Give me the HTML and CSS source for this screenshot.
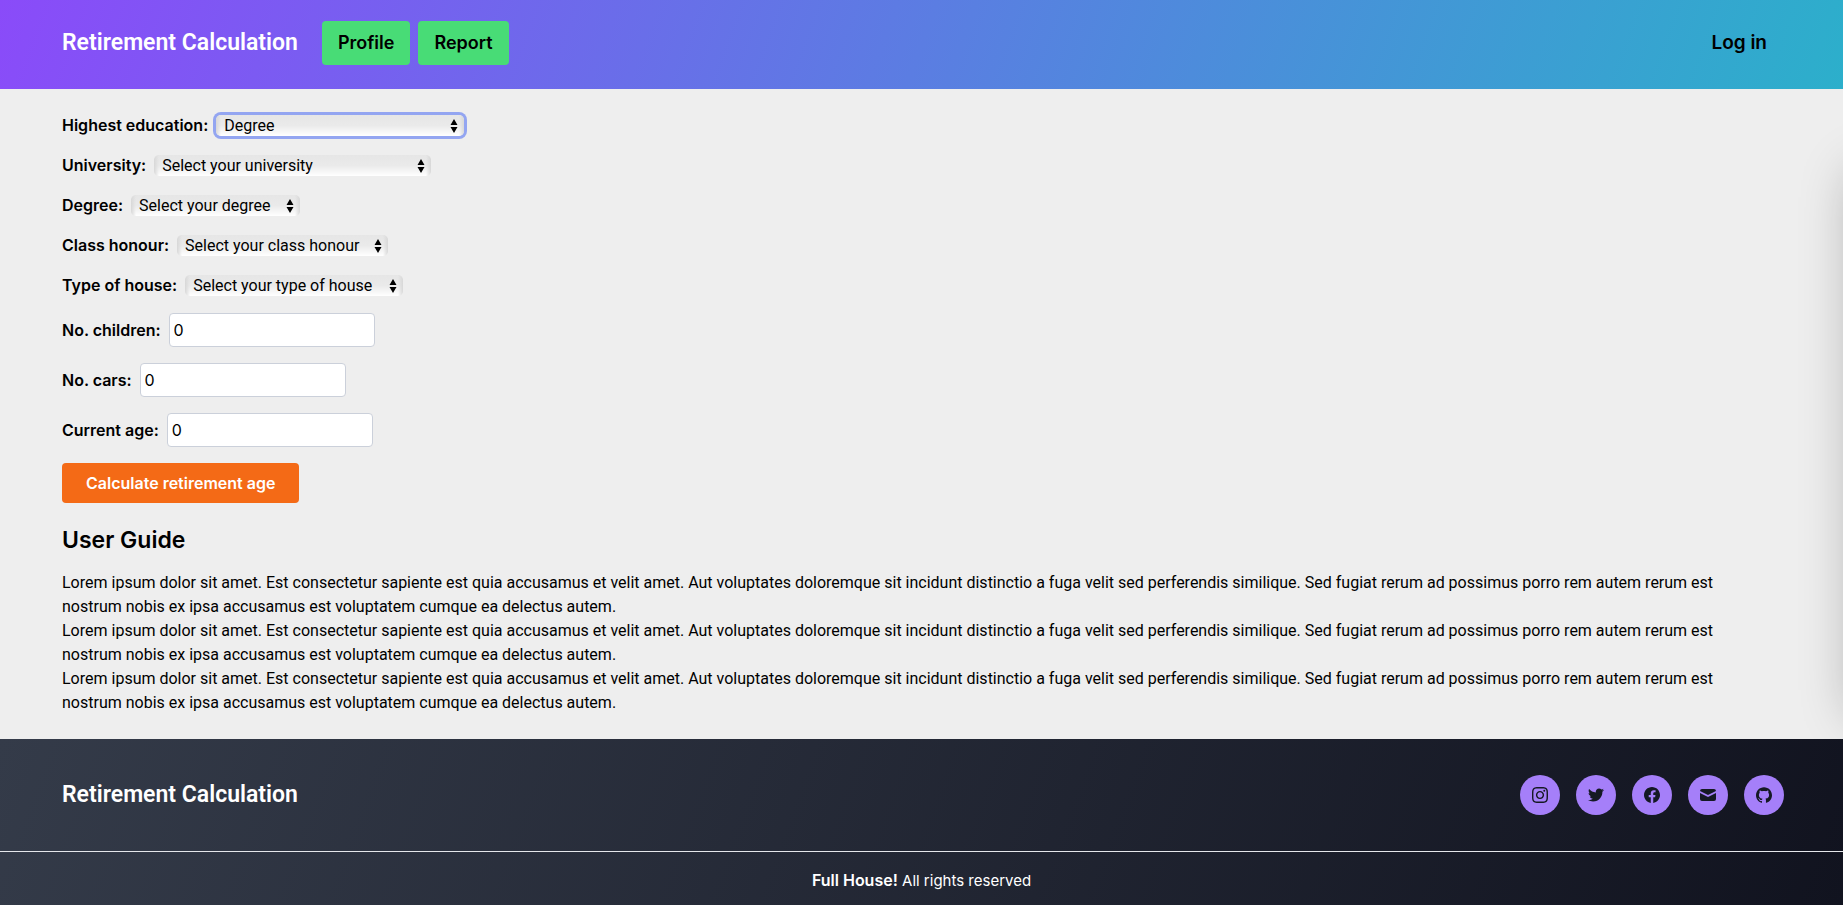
FILE: index.html
```html
<!DOCTYPE html>
<html lang="en">
<head>
<meta charset="utf-8">
<meta name="viewport" content="width=device-width, initial-scale=1">
<title>Retirement Calculation</title>
<link rel="stylesheet" href="styles.css">
</head>
<body>
<header class="header">
  <a class="brand" href="#">Retirement Calculation</a>
  <nav class="nav">
    <a class="nav-link" href="#profile">Profile</a>
    <a class="nav-link" href="#report">Report</a>
  </nav>
  <a class="login" href="#login">Log in</a>
</header>

<main class="main">
  <form class="form">
    <div class="row">
      <label class="label" for="education">Highest education:</label>
      <span class="picker picker-education picker-focused">
        <select class="select" id="education"><option>Degree</option></select>
        <svg class="arrows" viewBox="0 0 8 14" aria-hidden="true"><path d="M4 0 7.500 6H.5zM.5 8h7L4 14z"/></svg>
      </span>
    </div>
    <div class="row">
      <label class="label" for="university">University:</label>
      <span class="picker picker-university">
        <select class="select" id="university"><option>Select your university</option></select>
        <svg class="arrows" viewBox="0 0 8 14" aria-hidden="true"><path d="M4 0 7.500 6H.5zM.5 8h7L4 14z"/></svg>
      </span>
    </div>
    <div class="row">
      <label class="label" for="degree">Degree:</label>
      <span class="picker picker-degree">
        <select class="select" id="degree"><option>Select your degree</option></select>
        <svg class="arrows" viewBox="0 0 8 14" aria-hidden="true"><path d="M4 0 7.500 6H.5zM.5 8h7L4 14z"/></svg>
      </span>
    </div>
    <div class="row">
      <label class="label" for="honour">Class honour:</label>
      <span class="picker picker-honour">
        <select class="select" id="honour"><option>Select your class honour</option></select>
        <svg class="arrows" viewBox="0 0 8 14" aria-hidden="true"><path d="M4 0 7.500 6H.5zM.5 8h7L4 14z"/></svg>
      </span>
    </div>
    <div class="row">
      <label class="label" for="house">Type of house:</label>
      <span class="picker picker-house">
        <select class="select" id="house"><option>Select your type of house</option></select>
        <svg class="arrows" viewBox="0 0 8 14" aria-hidden="true"><path d="M4 0 7.500 6H.5zM.5 8h7L4 14z"/></svg>
      </span>
    </div>
    <div class="row">
      <label class="label" for="children">No. children:</label>
      <input class="input" id="children" type="text" inputmode="numeric" value="0">
    </div>
    <div class="row">
      <label class="label" for="cars">No. cars:</label>
      <input class="input" id="cars" type="text" inputmode="numeric" value="0">
    </div>
    <div class="row">
      <label class="label" for="age">Current age:</label>
      <input class="input" id="age" type="text" inputmode="numeric" value="0">
    </div>
    <button class="submit" type="button">Calculate retirement age</button>
  </form>

  <section class="guide">
    <h2 class="guide-title">User Guide</h2>
    <p class="text">Lorem ipsum dolor sit amet. Est consectetur sapiente est quia accusamus et velit amet. Aut voluptates doloremque sit incidunt distinctio a fuga velit sed perferendis similique. Sed fugiat rerum ad possimus porro rem autem rerum est nostrum nobis ex ipsa accusamus est voluptatem cumque ea delectus autem.</p>
    <p class="text">Lorem ipsum dolor sit amet. Est consectetur sapiente est quia accusamus et velit amet. Aut voluptates doloremque sit incidunt distinctio a fuga velit sed perferendis similique. Sed fugiat rerum ad possimus porro rem autem rerum est nostrum nobis ex ipsa accusamus est voluptatem cumque ea delectus autem.</p>
    <p class="text">Lorem ipsum dolor sit amet. Est consectetur sapiente est quia accusamus et velit amet. Aut voluptates doloremque sit incidunt distinctio a fuga velit sed perferendis similique. Sed fugiat rerum ad possimus porro rem autem rerum est nostrum nobis ex ipsa accusamus est voluptatem cumque ea delectus autem.</p>
  </section>
  <aside class="drawer" aria-hidden="true"></aside>
</main>

<footer class="footer">
  <div class="footer-top">
    <a class="brand" href="#">Retirement Calculation</a>
    <div class="social">
      <a class="social-link" href="#instagram" aria-label="Instagram">
        <svg class="icon" viewBox="0 0 24 24"><path d="M12 0C8.740 0 8.333.015 7.053.072 5.775.132 4.905.333 4.140.630c-.789.306-1.459.717-2.126 1.384S.935 3.350.630 4.140C.333 4.905.131 5.775.072 7.053.012 8.333 0 8.740 0 12s.015 3.667.072 4.947c.060 1.277.261 2.148.558 2.913.306.788.717 1.459 1.384 2.126.667.666 1.336 1.079 2.126 1.384.766.296 1.636.499 2.913.558C8.333 23.988 8.740 24 12 24s3.667-.015 4.947-.072c1.277-.060 2.148-.262 2.913-.558.788-.306 1.459-.718 2.126-1.384.666-.667 1.079-1.335 1.384-2.126.296-.765.499-1.636.558-2.913.060-1.280.072-1.687.072-4.947s-.015-3.667-.072-4.947c-.060-1.277-.262-2.149-.558-2.913-.306-.789-.718-1.459-1.384-2.126C21.319 1.347 20.651.935 19.860.630c-.765-.297-1.636-.499-2.913-.558C15.667.012 15.260 0 12 0zm0 2.160c3.203 0 3.585.016 4.850.071 1.170.055 1.805.249 2.227.415.562.217.960.477 1.382.896.419.420.679.819.896 1.381.164.422.360 1.057.413 2.227.057 1.266.070 1.646.070 4.850s-.015 3.585-.074 4.850c-.061 1.170-.256 1.805-.421 2.227-.224.562-.479.960-.899 1.382-.419.419-.824.679-1.380.896-.420.164-1.065.360-2.235.413-1.274.057-1.649.070-4.859.070-3.211 0-3.586-.015-4.859-.074-1.171-.061-1.816-.256-2.236-.421-.569-.224-.960-.479-1.379-.899-.421-.419-.690-.824-.900-1.380-.165-.420-.359-1.065-.420-2.235-.045-1.260-.061-1.649-.061-4.844 0-3.196.016-3.586.061-4.861.061-1.170.255-1.814.420-2.234.210-.570.479-.960.900-1.381.419-.419.810-.689 1.379-.898.420-.166 1.051-.361 2.221-.421 1.275-.045 1.650-.060 4.859-.060l.045.030zm0 3.678c-3.405 0-6.162 2.760-6.162 6.162 0 3.405 2.760 6.162 6.162 6.162 3.405 0 6.162-2.760 6.162-6.162 0-3.405-2.760-6.162-6.162-6.162zM12 16c-2.210 0-4-1.790-4-4s1.790-4 4-4 4 1.790 4 4-1.790 4-4 4zm7.846-10.405c0 .795-.646 1.440-1.440 1.440-.795 0-1.440-.646-1.440-1.440 0-.794.646-1.439 1.440-1.439.793-.001 1.440.645 1.440 1.439z"/></svg>
      </a>
      <a class="social-link" href="#twitter" aria-label="Twitter">
        <svg class="icon" viewBox="0 0 24 24"><path d="M23.954 4.569c-.885.389-1.830.654-2.825.775 1.014-.611 1.794-1.574 2.163-2.723-.951.555-2.005.959-3.127 1.184-.896-.959-2.173-1.559-3.591-1.559-2.717 0-4.920 2.203-4.920 4.917 0 .390.045.765.127 1.124C7.691 8.094 4.066 6.130 1.640 3.161c-.427.722-.666 1.561-.666 2.475 0 1.710.870 3.213 2.188 4.096-.807-.026-1.566-.248-2.228-.616v.061c0 2.385 1.693 4.374 3.946 4.827-.413.111-.849.171-1.296.171-.314 0-.615-.030-.916-.086.631 1.953 2.445 3.377 4.604 3.417-1.680 1.319-3.809 2.105-6.102 2.105-.390 0-.779-.023-1.170-.067 2.189 1.394 4.768 2.209 7.557 2.209 9.054 0 13.999-7.496 13.999-13.986 0-.209 0-.420-.015-.630.961-.689 1.800-1.560 2.460-2.548l-.047-.020z"/></svg>
      </a>
      <a class="social-link" href="#facebook" aria-label="Facebook">
        <svg class="icon" viewBox="0 0 24 24"><path d="M24 12.073c0-6.627-5.373-12-12-12s-12 5.373-12 12c0 5.990 4.388 10.954 10.125 11.854v-8.385H7.078v-3.470h3.047V9.430c0-3.007 1.792-4.669 4.533-4.669 1.312 0 2.686.235 2.686.235v2.953H15.830c-1.491 0-1.956.925-1.956 1.874v2.250h3.328l-.532 3.470h-2.796v8.385C19.612 23.027 24 18.062 24 12.073z"/></svg>
      </a>
      <a class="social-link" href="#email" aria-label="Email">
        <svg class="icon" viewBox="2 2 16 16"><path d="M2.003 5.884 10 9.882l7.997-3.998A2 2 0 0 0 16 4H4a2 2 0 0 0-1.997 1.884z"/><path d="m18 8.118-8 4-8-4V14a2 2 0 0 0 2 2h12a2 2 0 0 0 2-2V8.118z"/></svg>
      </a>
      <a class="social-link" href="#github" aria-label="GitHub">
        <svg class="icon" viewBox="0 0 24 24"><path d="M12 .297c-6.630 0-12 5.373-12 12 0 5.303 3.438 9.800 8.205 11.385.600.113.820-.258.820-.577 0-.285-.010-1.040-.015-2.040-3.338.724-4.042-1.610-4.042-1.610C4.422 18.070 3.633 17.700 3.633 17.700c-1.087-.744.084-.729.084-.729 1.205.084 1.838 1.236 1.838 1.236 1.070 1.835 2.809 1.305 3.495.998.108-.776.417-1.305.760-1.605-2.665-.300-5.466-1.332-5.466-5.930 0-1.310.465-2.380 1.235-3.220-.135-.303-.540-1.523.105-3.176 0 0 1.005-.322 3.300 1.230.960-.267 1.980-.399 3-.405 1.020.006 2.040.138 3 .405 2.280-1.552 3.285-1.230 3.285-1.230.645 1.653.240 2.873.120 3.176.765.840 1.230 1.910 1.230 3.220 0 4.610-2.805 5.625-5.475 5.920.420.360.810 1.096.810 2.220 0 1.606-.015 2.896-.015 3.286 0 .315.210.690.825.570C20.565 22.092 24 17.592 24 12.297c0-6.627-5.373-12-12-12"/></svg>
      </a>
    </div>
  </div>
  <p class="legal"><strong>Full House!</strong> All rights reserved</p>
</footer>
</body>
</html>
```

FILE: styles.css
```css
* {
  box-sizing: border-box;
}

body {
  margin: 0;
  background: #eee;
  color: #000;
  font-family: Inter, "Liberation Sans", sans-serif;
  font-size: 16px;
  line-height: 24px;
}

a {
  color: inherit;
  text-decoration: none;
}

.header {
  display: flex;
  align-items: center;
  padding: 21px 76px 24px 62px;
  background: linear-gradient(110deg, #8a4bf9, #2cafcb);
}

.brand {
  color: #fff;
  font-family: Roboto, "Liberation Sans", sans-serif;
  font-size: 23px;
  font-weight: 600;
  line-height: 32px;
}

.nav {
  display: flex;
  gap: 8px;
  margin-left: 24px;
}

.nav-link {
  padding: 8px 16px;
  border-radius: 4px;
  background: #48dc76;
  font-size: 18px;
  font-weight: 600;
  line-height: 28px;
}

.login {
  margin-left: auto;
  font-size: 19px;
  font-weight: 600;
  line-height: 28px;
}

.main {
  position: relative;
  overflow: hidden;
  padding: 24px 62px;
}

.form {
  display: flex;
  flex-direction: column;
  align-items: flex-start;
  gap: 16px;
}

.row {
  display: flex;
  align-items: center;
  gap: 8px;
}

.label {
  font-weight: 600;
}

.picker {
  position: relative;
  display: block;
  border-radius: 5px;
}

.picker-education { width: 248px; }
.picker-university { width: 277px; }
.picker-degree { width: 169px; }
.picker-honour { width: 211px; }
.picker-house { width: 218px; }

.picker-focused {
  box-shadow: 0 0 0 3px #93a5f1;
}

.select {
  display: block;
  appearance: none;
  width: 100%;
  height: 21px;
  padding: 0 8px;
  border: 0;
  border-radius: 5px;
  outline: 0;
  background:
    linear-gradient(90deg, #d8d8d8, transparent 5px),
    linear-gradient(270deg, #d8d8d8, transparent 5px),
    linear-gradient(#e6e6e6, #eaeaea 50%, #fff);
  color: #000;
  font-family: Roboto, "Liberation Sans", sans-serif;
  font-size: 16px;
  line-height: 21px;
}

.arrows {
  position: absolute;
  top: 4px;
  right: 6px;
  width: 8px;
  height: 14px;
  pointer-events: none;
}

.input {
  width: 206px;
  height: 34px;
  padding: 4px;
  border: 1px solid #cbd0da;
  border-radius: 4px;
  background: #fff;
  color: #000;
  font-family: inherit;
  font-size: 16px;
}

.submit {
  padding: 8px 24px;
  border: 0;
  border-radius: 4px;
  background: #f46a16;
  color: #fff;
  font-family: inherit;
  font-size: 16px;
  font-weight: 600;
  line-height: 24px;
}

.guide {
  padding-right: 36px;
}

.guide-title {
  margin: 20px 0 14px;
  font-size: 23px;
  font-weight: 600;
  line-height: 34px;
}

.text {
  margin: 0;
  font-family: Roboto, "Liberation Sans", sans-serif;
}

.drawer {
  position: absolute;
  top: 46px;
  bottom: 37px;
  left: 100%;
  width: 256px;
  box-shadow: 0 25px 50px -12px rgba(0, 0, 0, 0.3);
}

.footer {
  background: linear-gradient(110deg, #343b49, #11131f);
  color: #fff;
}

.footer-top {
  display: flex;
  align-items: center;
  justify-content: space-between;
  padding: 36px 59px 36px 62px;
  border-bottom: 1px solid #e5e7eb;
}

.social {
  display: flex;
  gap: 16px;
}

.social-link {
  display: flex;
  align-items: center;
  justify-content: center;
  width: 40px;
  height: 40px;
  border-radius: 50%;
  background: #a57ff9;
  color: #151924;
}

.icon {
  width: 16px;
  height: 16px;
  fill: currentColor;
}

.legal {
  margin: 0;
  padding: 16px 24px 13px;
  font-size: 15px;
  text-align: center;
}

.legal strong {
  font-size: 16px;
  font-weight: 600;
}
```
